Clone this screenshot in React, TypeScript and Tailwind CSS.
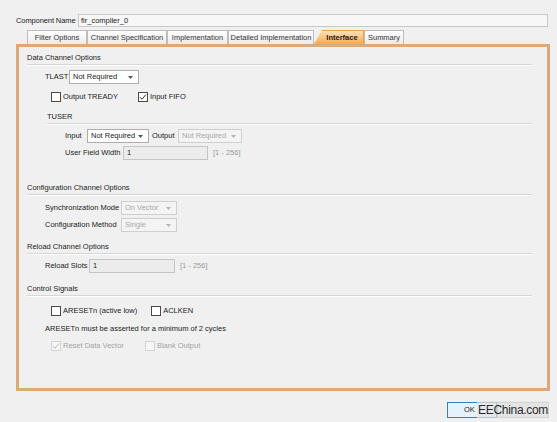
import React from "react";

const Arrow = ({ disabled }: { disabled?: boolean }) => (
  <svg width="5" height="3" viewBox="0 0 5 3" className="shrink-0">
    <path d="M0 0h5L2.5 3z" fill={disabled ? "#b5b5b5" : "#555"} />
  </svg>
);

const Select = ({
  value,
  width,
  disabled,
}: {
  value: string;
  width: string;
  disabled?: boolean;
}) => (
  <div
    className={`${width} h-[14px] flex items-center justify-between pl-[3px] pr-[5px] border ${
      disabled
        ? "border-[#cfcfcf] bg-[#f4f4f4] text-[#a8a8a8]"
        : "border-[#adadad] bg-white text-[#222]"
    }`}
  >
    <span>{value}</span>
    <Arrow disabled={disabled} />
  </div>
);

const TextBox = ({ value, width }: { value: string; width: string }) => (
  <div
    className={`${width} h-[14px] flex items-center pl-[3px] border border-[#c4c4c4] bg-[#ececec] text-[#222]`}
  >
    {value}
  </div>
);

const Check = ({
  label,
  checked,
  disabled,
}: {
  label: string;
  checked?: boolean;
  disabled?: boolean;
}) => (
  <div className="flex items-center gap-[2px]">
    <div
      className={`w-[10px] h-[10px] border flex items-center justify-center ${
        disabled ? "border-[#d4d4d4] bg-[#f6f6f6]" : "border-[#4a4a4a] bg-white"
      }`}
    >
      {checked && (
        <svg width="8" height="8" viewBox="0 0 8 8">
          <path
            d="M1 4.2l2 2L7 1.5"
            fill="none"
            stroke={disabled ? "#b8b8b8" : "#333"}
            strokeWidth="1"
          />
        </svg>
      )}
    </div>
    <span className={disabled ? "text-[#a4a4a4]" : "text-[#222]"}>{label}</span>
  </div>
);

const Section = ({ title, top }: { title: string; top: string }) => (
  <div className={top}>
    <div className="h-[10px] leading-[10px] text-[#222]">{title}</div>
    <div className="mt-[1px] w-[505px] border-t border-[#d6d6d6] border-b-white border-b" />
  </div>
);

const tabs = [
  { name: "Filter Options", w: "w-[60px]" },
  { name: "Channel Specification", w: "w-[80px]" },
  { name: "Implementation", w: "w-[61px]" },
  { name: "Detailed Implementation", w: "w-[86px]" },
  { name: "Interface", w: "w-[50px]", active: true },
  { name: "Summary", w: "w-[40px]" },
];

export default function App() {
  return (
    <div className="relative w-[557px] h-[422px] overflow-hidden bg-[#f0f0f0] pl-[16px] pt-[14px] text-[7.5px] leading-[10px] font-['Liberation_Sans',Arial,sans-serif] text-[#222]">
      <div className="flex items-center h-[13px]">
        <span className="w-[62px] whitespace-nowrap tracking-[-0.1px]">Component Name</span>
        <div className="w-[470px] h-[13px] flex items-center pl-[2px] border border-[#c8c8c8] bg-[#f7f7f7]">
          fir_compiler_0
        </div>
      </div>

      <div className="flex mt-[3px] pl-[11px] h-[14px] items-end">
        {tabs.map((t) => (
          <div
            key={t.name}
            className={`${t.w} h-[14px] flex items-center justify-center border border-b-0 ${
              t.active
                ? "border-[#e7a24f] bg-gradient-to-b from-[#fde2b6] to-[#f4a94d] font-bold text-[#1a1a1a] [clip-path:polygon(8px_0,100%_0,100%_100%,0_100%)] pl-[6px]"
                : "border-[#bdbdbd] bg-gradient-to-b from-[#ffffff] to-[#ebebeb] text-[#333]"
            }`}
          >
            {t.name}
          </div>
        ))}
      </div>

      <div className="w-[534px] h-[347px] border-[3px] border-[#d9aa7b] bg-[#f0f0f0] pl-[8px] pt-[6px]">
        <Section title="Data Channel Options" top="" />
        <div className="flex items-center mt-[4px] pl-[18px] h-[14px]">
          <span className="w-[24px]">TLAST</span>
          <Select value="Not Required" width="w-[70px]" />
        </div>
        <div className="flex items-center mt-[8px] pl-[24px] h-[10px] gap-[20px]">
          <Check label="Output TREADY" />
          <Check label="Input FIFO" checked />
        </div>

        <div className="mt-[10px] pl-[20px]">
          <div className="h-[10px]">TUSER</div>
          <div className="mt-[1px] w-[485px] border-t border-[#d6d6d6] border-b border-b-white" />
        </div>
        <div className="flex items-center mt-[4px] pl-[38px] h-[14px]">
          <span className="w-[22px]">Input</span>
          <Select value="Not Required" width="w-[62px]" />
          <span className="ml-[3px] w-[26px]">Output</span>
          <Select value="Not Required" width="w-[64px]" disabled />
        </div>
        <div className="flex items-center mt-[3px] pl-[38px] h-[14px]">
          <span className="w-[58px]">User Field Width</span>
          <TextBox value="1" width="w-[85px]" />
          <span className="ml-[5px] text-[#9a9a9a]">[1 - 256]</span>
        </div>

        <Section title="Configuration Channel Options" top="mt-[23px]" />
        <div className="flex items-center mt-[5px] pl-[18px] h-[14px]">
          <span className="w-[76px]">Synchronization Mode</span>
          <Select value="On Vector" width="w-[56px]" disabled />
        </div>
        <div className="flex items-center mt-[3px] pl-[18px] h-[14px]">
          <span className="w-[76px]">Configuration Method</span>
          <Select value="Single" width="w-[56px]" disabled />
        </div>

        <Section title="Reload Channel Options" top="mt-[10px]" />
        <div className="flex items-center mt-[4px] pl-[18px] h-[14px]">
          <span className="w-[44px]">Reload Slots</span>
          <TextBox value="1" width="w-[86px]" />
          <span className="ml-[5px] text-[#9a9a9a]">[1 - 256]</span>
        </div>

        <Section title="Control Signals" top="mt-[11px]" />
        <div className="flex items-center mt-[9px] pl-[24px] h-[10px] gap-[14px]">
          <Check label="ARESETn (active low)" />
          <Check label="ACLKEN" />
        </div>
        <div className="mt-[8px] pl-[18px] h-[10px]">
          ARESETn must be asserted for a minimum of 2 cycles
        </div>
        <div className="flex items-center mt-[7px] pl-[24px] h-[10px] gap-[21px]">
          <Check label="Reset Data Vector" checked disabled />
          <Check label="Blank Output" disabled />
        </div>
      </div>

      <div className="flex justify-end w-[533px] mt-[11px]">
        <div className="w-[50px] h-[16px] flex items-center pl-[16px] border border-[#3c7fb1] bg-[#e5f1fb]">
          OK
        </div>
        <div className="w-[52px] h-[16px] border border-[#adadad] bg-[#e1e1e1]" />
      </div>
      <div className="absolute left-[477px] top-[401px] h-[17px] px-[1px] flex items-center bg-[#e6e6e6]/70 text-[12px] text-[#2a2a2a] font-['Liberation_Sans',Arial,sans-serif] tracking-[-0.3px]">
        EEChina.com
      </div>
    </div>
  );
}
